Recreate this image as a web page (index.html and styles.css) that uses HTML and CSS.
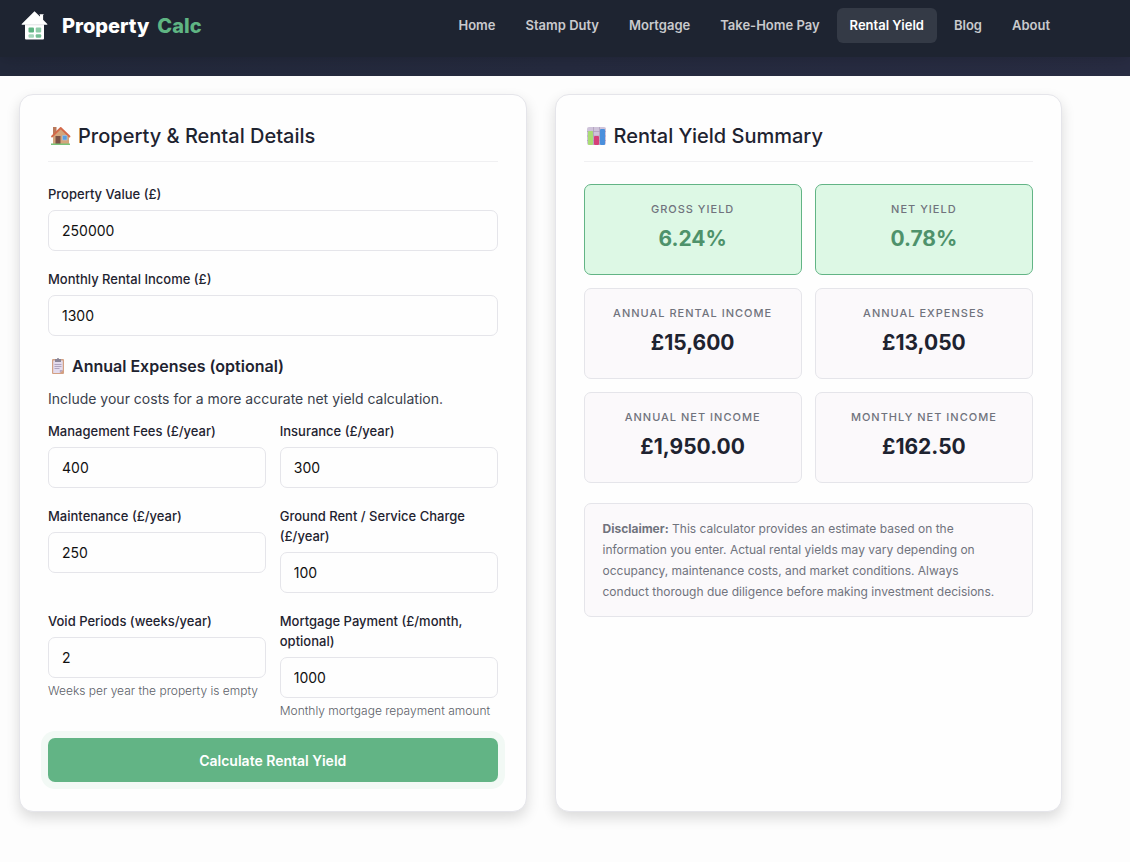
FILE: index.html
```html
<!DOCTYPE html>
<html lang="en">
<head>
    <meta charset="UTF-8">
    <meta name="viewport" content="width=device-width, initial-scale=1.0">
    <title>Rental Yield Calculator | Property Calc</title>
    <link rel="stylesheet" href="styles.css">
</head>
<body>
    <header class="site-header">
        <a class="logo" href="#">
            <svg class="logo-icon" width="28" height="30" viewBox="0 1 28 30" aria-hidden="true">
                <path fill="#fff" d="M14.5 1.2 20 6.600V5h-.4V4.200h4V5h-.5v4.800l4.200 4.100v.8H24V28.500a1 1 0 0 1-1 1H6a1 1 0 0 1-1-1V14.700H1.700v-.8z"/>
                <path stroke="#c9cdd2" stroke-width=".6" d="M5 14.800h19"/>
                <rect x="8.500" y="17.500" width="5.500" height="5" rx="1" fill="#5fb583"/>
                <rect x="15.700" y="17.500" width="5.500" height="5" rx="1" fill="#8ecba8"/>
                <rect x="8.500" y="24.200" width="5.500" height="3.500" rx="1" fill="#a5d6ba"/>
                <rect x="15.700" y="24.200" width="5.500" height="3.500" rx="1" fill="#74bf94"/>
            </svg>
            <span class="logo-text">Property</span>
            <span class="logo-text accent">Calc</span>
        </a>
        <nav class="nav">
            <a href="#">Home</a>
            <a href="#">Stamp Duty</a>
            <a href="#">Mortgage</a>
            <a href="#">Take-Home Pay</a>
            <a href="#" class="active">Rental Yield</a>
            <a href="#">Blog</a>
            <a href="#">About</a>
        </nav>
    </header>
    <div class="hero"></div>

    <main class="calculator">
        <form class="card" id="yield-form">
            <h2 class="card-title">
                <svg width="26" height="22" viewBox="0 0 26 22" aria-hidden="true">
                    <path fill="#b9785a" d="M5 2h3.500v7H5z"/>
                    <path fill="#d3a57c" d="M5 11 12.500 3 21 11v8H5z"/>
                    <path fill="none" stroke="#d4694a" stroke-width="1.800" stroke-linecap="round" stroke-linejoin="round" d="M4 11.500 12.700 3 21.500 11.500"/>
                    <path fill="#7b5146" d="M7.500 11h5v8h-5z"/>
                    <path fill="#5a9ee0" stroke="#a9c4e0" stroke-width=".6" d="M14.500 10.500h4.500v4.500h-4.500z"/>
                    <path fill="#79c278" d="M3 18.500h19V20H3z"/>
                </svg>
                Property &amp; Rental Details
            </h2>

            <div class="field">
                <label for="property-value">Property Value (£)</label>
                <input type="text" inputmode="numeric" id="property-value" value="250000">
            </div>
            <div class="field">
                <label for="monthly-rent">Monthly Rental Income (£)</label>
                <input type="text" inputmode="numeric" id="monthly-rent" value="1300">
            </div>

            <h3 class="section-title">
                <svg width="20" height="20" viewBox="0 0 20 20" aria-hidden="true">
                    <rect x="4" y="3" width="12" height="15" rx="1" fill="#d3a083"/>
                    <path fill="#e3dbed" d="M5.200 4.500h9.600V14l-3 3H5.200z"/>
                    <path fill="#b5a5c4" d="M14.800 14h-3v3z"/>
                    <path fill="#8a8496" d="M7 3h2a1 1 0 0 1 2 0h2v3H7z"/>
                    <path stroke="#a99dba" stroke-width=".9" d="M6.500 8.500h7M6.500 10.500h7M6.500 12.500h5"/>
                </svg>
                Annual Expenses (optional)
            </h3>
            <p class="section-note">Include your costs for a more accurate net yield calculation.</p>

            <div class="field-grid">
                <div class="field">
                    <label for="management">Management Fees (£/year)</label>
                    <input type="text" inputmode="numeric" id="management" value="400">
                </div>
                <div class="field">
                    <label for="insurance">Insurance (£/year)</label>
                    <input type="text" inputmode="numeric" id="insurance" value="300">
                </div>
                <div class="field">
                    <label for="maintenance">Maintenance (£/year)</label>
                    <input type="text" inputmode="numeric" id="maintenance" value="250">
                </div>
                <div class="field">
                    <label for="ground-rent">Ground Rent / Service Charge (£/year)</label>
                    <input type="text" inputmode="numeric" id="ground-rent" value="100">
                </div>
                <div class="field">
                    <label for="void-weeks">Void Periods (weeks/year)</label>
                    <input type="text" inputmode="numeric" id="void-weeks" value="2">
                    <small>Weeks per year the property is empty</small>
                </div>
                <div class="field">
                    <label for="mortgage">Mortgage Payment (£/month, optional)</label>
                    <input type="text" inputmode="numeric" id="mortgage" value="1000">
                    <small>Monthly mortgage repayment amount</small>
                </div>
            </div>

            <button type="button" class="btn-primary">Calculate Rental Yield</button>
        </form>

        <section class="card">
            <h2 class="card-title">
                <svg width="26" height="22" viewBox="0 0 26 22" aria-hidden="true">
                    <rect x="3" y="2" width="19" height="18" rx="2" fill="#cfc3da"/>
                    <path stroke="#a99bb8" stroke-width=".7" d="M3 6.500h19M3 11h19M3 15.500h19M9.500 2v18M15.500 2v18"/>
                    <rect x="4" y="6" width="5" height="14" rx="1" fill="#a9dc74"/>
                    <rect x="10" y="11" width="5" height="9" rx="1" fill="#d63f78"/>
                    <rect x="16" y="4" width="5" height="16" rx="1" fill="#4a8fdc"/>
                </svg>
                Rental Yield Summary
            </h2>

            <div class="stats">
                <div class="stat highlight">
                    <div class="stat-label">Gross Yield</div>
                    <div class="stat-value">6.24%</div>
                </div>
                <div class="stat highlight">
                    <div class="stat-label">Net Yield</div>
                    <div class="stat-value">0.78%</div>
                </div>
                <div class="stat">
                    <div class="stat-label">Annual Rental Income</div>
                    <div class="stat-value">£15,600</div>
                </div>
                <div class="stat">
                    <div class="stat-label">Annual Expenses</div>
                    <div class="stat-value">£13,050</div>
                </div>
                <div class="stat">
                    <div class="stat-label">Annual Net Income</div>
                    <div class="stat-value">£1,950.00</div>
                </div>
                <div class="stat">
                    <div class="stat-label">Monthly Net Income</div>
                    <div class="stat-value">£162.50</div>
                </div>
            </div>

            <p class="disclaimer"><strong>Disclaimer:</strong> This calculator provides an estimate based on the information you enter. Actual rental yields may vary depending on occupancy, maintenance costs, and market conditions. Always conduct thorough due diligence before making investment decisions.</p>
        </section>
    </main>
</body>
</html>
```
FILE: styles.css
```css
* {
    box-sizing: border-box;
}

body {
    margin: 0;
    font-family: Inter, "Liberation Sans", sans-serif;
    font-size: 14px;
    background-color: #fdfdfd;
    color: #1e2330;
}

h2, h3, p {
    margin: 0;
}

.site-header {
    position: relative;
    display: flex;
    align-items: center;
    justify-content: space-between;
    padding: 8px 67px 14px 20px;
    background-color: #1e2431;
    box-shadow: 0 2px 14px rgba(0, 0, 0, 0.15);
}

.logo {
    display: flex;
    align-items: center;
    color: #fff;
    text-decoration: none;
}

.logo-icon {
    margin-right: 14px;
}

.logo-text {
    font-size: 20px;
    line-height: 24px;
    font-weight: 800;
}

.logo-text.accent {
    margin-left: 8px;
    color: #5fb583;
}

.nav {
    display: flex;
    gap: 4px;
}

.nav a {
    padding: 7px 13px;
    border-radius: 6px;
    font-size: 13px;
    line-height: 21px;
    font-weight: 600;
    color: #c9cacd;
    text-decoration: none;
}

.nav a.active {
    background-color: #343a46;
    color: #fff;
}

.hero {
    height: 19px;
    background: linear-gradient(90deg, #22283a, #282c42);
}

.calculator {
    display: grid;
    grid-template-columns: 1fr 1fr;
    gap: 28px;
    padding: 18px 68px 40px 19px;
}

.card {
    padding: 29px 28px;
    background-color: #fefefe;
    border: 1px solid #e5e5ea;
    border-radius: 14px;
    box-shadow: 0 6px 14px rgba(0, 0, 0, 0.14);
}

.card-title {
    display: flex;
    align-items: center;
    gap: 4px;
    margin-bottom: 22px;
    padding-bottom: 13px;
    border-bottom: 1px solid #f0f0f2;
    font-size: 20px;
    line-height: 24px;
    font-weight: 500;
}

.section-title {
    display: flex;
    align-items: center;
    gap: 4px;
    margin-bottom: 9px;
    font-size: 16px;
    line-height: 24px;
    font-weight: 600;
}

.section-note {
    margin-bottom: 10px;
    font-size: 14px;
    line-height: 24px;
    color: #3a3f4c;
}

.field {
    margin-bottom: 18px;
}

.field label {
    display: block;
    margin-bottom: 6px;
    font-size: 13px;
    line-height: 20px;
    font-weight: 500;
}

.field input {
    display: block;
    width: 100%;
    height: 41px;
    padding: 0 13px;
    border: 1px solid #e5e5ea;
    border-radius: 7px;
    background-color: #fefefe;
    font-family: inherit;
    font-size: 14px;
    color: #111;
}

.field small {
    display: block;
    margin-top: 4px;
    font-size: 12px;
    line-height: 18px;
    font-weight: 300;
    color: #5c5f68;
}

.field-grid {
    display: grid;
    grid-template-columns: 1fr 1fr;
    column-gap: 14px;
}

.btn-primary {
    display: block;
    width: 100%;
    height: 44px;
    border: none;
    border-radius: 7px;
    background-color: #62b485;
    box-shadow: 0 0 0 7px #f2f9f5;
    font-family: inherit;
    font-size: 14px;
    font-weight: 600;
    color: #fff;
    cursor: pointer;
}

.stats {
    display: grid;
    grid-template-columns: 1fr 1fr;
    gap: 13px;
    margin-bottom: 20px;
}

.stat {
    padding: 15px 16px 18px;
    border: 1px solid #e5e5ea;
    border-radius: 7px;
    background-color: #fbf9fb;
    text-align: center;
}

.stat.highlight {
    border-color: #62b485;
    background-color: #ddf8e5;
}

.stat-label {
    margin-bottom: 3px;
    font-size: 11px;
    line-height: 19px;
    font-weight: 500;
    letter-spacing: 1px;
    text-transform: uppercase;
    color: #70737d;
}

.stat-value {
    font-size: 21px;
    line-height: 34px;
    font-weight: 700;
}

.stat.highlight .stat-value {
    color: #4e926b;
}

.disclaimer {
    padding: 14px 28px 14px 18px;
    border: 1px solid #e5e5ea;
    border-radius: 7px;
    background-color: #fbf9fb;
    font-size: 12px;
    line-height: 21px;
    color: #70737d;
}

@media (max-width: 800px) {
    .calculator {
        grid-template-columns: 1fr;
    }
}
```
